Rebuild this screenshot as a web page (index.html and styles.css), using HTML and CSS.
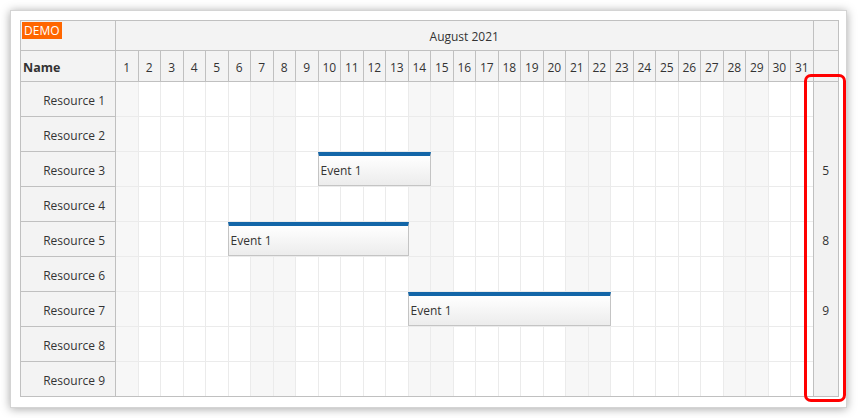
FILE: index.html
```html
<!DOCTYPE html>
<html>
<head>
<meta charset="utf-8">
<link rel="stylesheet" href="styles.css">
</head>
<body>
<div class="frame">
  <div class="scheduler">
    <div class="corner"><span class="demo">DEMO</span></div>
    <div class="month">August 2021</div>
    <div class="total-head"></div>

    <div class="name-head">Name</div>
    <div class="days">
      <div class="day">1</div><div class="day">2</div><div class="day">3</div><div class="day">4</div><div class="day">5</div><div class="day">6</div><div class="day">7</div><div class="day">8</div><div class="day">9</div><div class="day">10</div><div class="day">11</div><div class="day">12</div><div class="day">13</div><div class="day">14</div><div class="day">15</div><div class="day">16</div><div class="day">17</div><div class="day">18</div><div class="day">19</div><div class="day">20</div><div class="day">21</div><div class="day">22</div><div class="day">23</div><div class="day">24</div><div class="day">25</div><div class="day">26</div><div class="day">27</div><div class="day">28</div><div class="day">29</div><div class="day">30</div><div class="day">31</div>
    </div>
    <div class="total-head"></div>

    <div class="resources">
      <div class="resource">Resource 1</div>
      <div class="resource">Resource 2</div>
      <div class="resource">Resource 3</div>
      <div class="resource">Resource 4</div>
      <div class="resource">Resource 5</div>
      <div class="resource">Resource 6</div>
      <div class="resource">Resource 7</div>
      <div class="resource">Resource 8</div>
      <div class="resource">Resource 9</div>
    </div>

    <div class="grid">
      <div class="cols">
        <div class="col weekend"></div><div class="col"></div><div class="col"></div><div class="col"></div><div class="col"></div><div class="col"></div><div class="col weekend"></div><div class="col weekend"></div><div class="col"></div><div class="col"></div><div class="col"></div><div class="col"></div><div class="col"></div><div class="col weekend"></div><div class="col weekend"></div><div class="col"></div><div class="col"></div><div class="col"></div><div class="col"></div><div class="col"></div><div class="col weekend"></div><div class="col weekend"></div><div class="col"></div><div class="col"></div><div class="col"></div><div class="col"></div><div class="col"></div><div class="col weekend"></div><div class="col weekend"></div><div class="col"></div><div class="col"></div>
      </div>
      <div class="rows">
        <div class="row"></div>
        <div class="row"></div>
        <div class="row"><div class="event" style="left: 201.5px; width: 113.5px;">Event 1</div></div>
        <div class="row"></div>
        <div class="row"><div class="event" style="left: 111.5px; width: 181px;">Event 1</div></div>
        <div class="row"></div>
        <div class="row"><div class="event" style="left: 291.5px; width: 203.5px;">Event 1</div></div>
        <div class="row"></div>
        <div class="row"></div>
      </div>
    </div>

    <div class="totals">
      <div class="total"></div>
      <div class="total"></div>
      <div class="total">5</div>
      <div class="total"></div>
      <div class="total">8</div>
      <div class="total"></div>
      <div class="total">9</div>
      <div class="total"></div>
      <div class="total"></div>
    </div>
  </div>
</div>
<div class="highlight"></div>
</body>
</html>
```

FILE: styles.css
```css
* {
  box-sizing: border-box;
}

html, body {
  margin: 0;
  padding: 0;
  background: #ffffff;
}

body {
  position: relative;
  width: 860px;
  height: 418px;
  overflow: hidden;
  font-family: "Open Sans", "Noto Sans", sans-serif;
  font-size: 12px;
  color: #333333;
}

.frame {
  margin: 10px 0 0 10px;
  width: 837px;
  height: 398px;
  padding: 9px;
  background: #ffffff;
  border: 1px solid #d4d4d4;
  box-shadow: 0 1px 9px rgba(0, 0, 0, 0.35);
}

.scheduler {
  display: grid;
  grid-template-columns: 95px 697.5px 24.5px;
  grid-template-rows: 30px 31px 314px;
  width: 819px;
  height: 377px;
  border: 1px solid #c0c0c0;
  background: #ffffff;
}

.corner {
  background: #f3f3f3;
  border-right: 1px solid #c0c0c0;
  border-bottom: 1px solid #c0c0c0;
  padding: 1px;
}

.demo {
  display: inline-block;
  background: #ff6600;
  color: #ffffff;
  height: 17px;
  line-height: 17px;
  padding: 0 2px 0 2px;
}

.month {
  background: #f3f3f3;
  border-right: 1px solid #c0c0c0;
  border-bottom: 1px solid #c0c0c0;
  display: flex;
  align-items: center;
  justify-content: center;
  padding-top: 2px;
}

.total-head {
  background: #f3f3f3;
  border-bottom: 1px solid #c0c0c0;
}

.name-head {
  background: #f3f3f3;
  border-right: 1px solid #c0c0c0;
  border-bottom: 1px solid #c0c0c0;
  display: flex;
  align-items: center;
  padding-left: 2px;
  padding-top: 2px;
  font-weight: bold;
  font-size: 12.5px;
}

.days {
  display: flex;
  background: #f3f3f3;
  border-bottom: 1px solid #c0c0c0;
}

.day {
  flex: 0 0 22.5px;
  border-right: 1px solid #c0c0c0;
  display: flex;
  align-items: center;
  justify-content: center;
  padding-top: 2px;
}

.resources {
  background: #f3f3f3;
  border-right: 1px solid #c0c0c0;
  display: flex;
  flex-direction: column;
}

.resource {
  height: 35px;
  flex: 0 0 35px;
  border-bottom: 1px solid #c0c0c0;
  display: flex;
  align-items: center;
  justify-content: flex-end;
  padding-right: 10px;
  padding-top: 2px;
}

.resource:last-child {
  flex-basis: 34px;
  height: 34px;
  border-bottom: none;
}

.grid {
  position: relative;
}

.cols {
  display: flex;
  height: 100%;
}

.col {
  flex: 0 0 22.5px;
  border-right: 1px solid #ebebeb;
}

.col.weekend {
  background: #f7f7f7;
}

.col:last-child {
  border-right-color: #c0c0c0;
}

.rows {
  position: absolute;
  inset: 0;
  display: flex;
  flex-direction: column;
}

.row {
  position: relative;
  flex: 0 0 35px;
  margin-right: 1px;
  border-bottom: 1px solid #ebebeb;
}

.row:last-child {
  flex-basis: 34px;
  border-bottom: none;
}

.event {
  position: absolute;
  top: 0;
  height: 34px;
  border: 1px solid #c4c4c4;
  border-top: 4px solid #1366a8;
  background: linear-gradient(to bottom, #ffffff 0%, #ececec 100%);
  padding-left: 2px;
  display: flex;
  align-items: center;
  white-space: nowrap;
}

.totals {
  background: #f2f2f2;
  display: flex;
  flex-direction: column;
}

.total {
  flex: 0 0 35px;
  display: flex;
  align-items: center;
  justify-content: center;
  padding-top: 2px;
}

.total:last-child {
  flex-basis: 34px;
}

.highlight {
  position: absolute;
  left: 804px;
  top: 74px;
  width: 42px;
  height: 328px;
  border: 3px solid #ff0000;
  border-radius: 7px;
}
```
